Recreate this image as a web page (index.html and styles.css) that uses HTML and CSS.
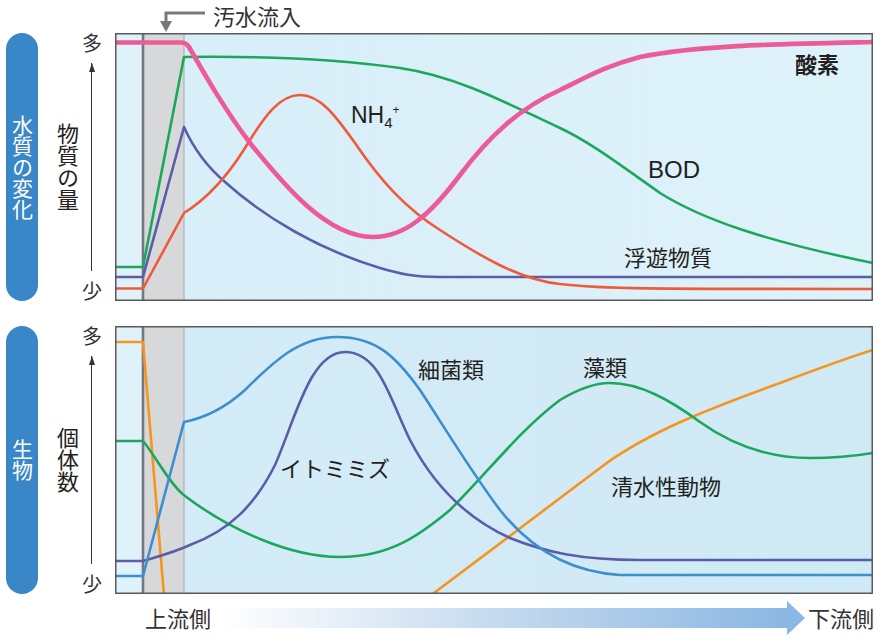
FILE: index.html
```html
<!DOCTYPE html>
<html lang="ja">
<head>
<meta charset="utf-8">
<title>河川の自浄作用</title>
<link rel="stylesheet" href="styles.css">
</head>
<body>
<div class="page">
  <div class="inflow">
    <svg class="inflow-arrow" viewBox="158 0 48 33">
      <path class="inflow-stroke" d="M205,13 H166 V24"/>
      <polygon class="inflow-head" points="160,21 172,21 166,32"/>
    </svg>
    <span class="inflow-label">汚水流入</span>
  </div>

  <div class="section">
    <div class="pill"><span class="pill-text">水質の変化</span></div>
    <div class="axis">
      <span class="axis-title">物質の量</span>
      <div class="scale">
        <span class="scale-mark">多</span>
        <div class="scale-arrow"></div>
        <span class="scale-mark">少</span>
      </div>
    </div>
    <svg class="chart" viewBox="115 33 758 268">
      <defs>
        <linearGradient id="bgTop" x1="0" x2="1" y1="0" y2="0">
          <stop offset="0" stop-color="#d8eef8"/>
          <stop offset="1" stop-color="#def2fa"/>
        </linearGradient>
      </defs>
      <rect class="bg-strip" x="115" y="33" width="28" height="268"/>
      <rect class="bg-top" x="184" y="33" width="689" height="268"/>
      <rect class="band" x="143" y="33" width="41" height="268"/>
      <line class="band-edge" x1="184" y1="33" x2="184" y2="301"/>
      <line class="band-line" x1="143" y1="33" x2="143" y2="301"/>

      <path class="ln ln-green" d="M115,267 L143,267 L184,57 C260,56 330,58 400,68 C460,77 510,105 560,128 C590,142 620,165 660,193 C700,218 760,240 873,263"/>
      <path class="ln ln-purple" d="M115,277 L143,277 L184,127 C192,145 205,165 225,182 C265,218 320,250 380,268 C400,274 415,277 440,277 L873,277"/>
      <path class="ln ln-red" d="M115,288.5 L143,288.5 L184,213 C205,200 225,180 245,148 C265,115 280,95 300,95 C320,95 335,115 355,143 C380,180 405,208 440,230 C480,256 520,280 560,284 C600,289 650,289 873,289"/>
      <path class="ln ln-pink" d="M115,42.5 L181,42.5 Q186,42.5 189,47 C205,75 225,110 250,143 C280,180 325,237 373,237 C405,237 430,215 460,175 C490,135 520,108 560,90 C585,78 605,66 640,57 C700,45 780,44 873,42"/>

      <text class="lbl lbl-latin" x="351" y="123">NH<tspan class="sub" dy="5">4</tspan><tspan class="sup" dy="-14">+</tspan></text>
      <text class="lbl lbl-strong" x="795" y="73">酸素</text>
      <text class="lbl lbl-latin lbl-bod" x="648" y="178">BOD</text>
      <text class="lbl" x="624" y="266">浮遊物質</text>

      <rect class="frame" x="115.75" y="33.75" width="756.5" height="266.5"/>
    </svg>
  </div>

  <div class="section">
    <div class="pill"><span class="pill-text">生物</span></div>
    <div class="axis">
      <span class="axis-title">個体数</span>
      <div class="scale">
        <span class="scale-mark">多</span>
        <div class="scale-arrow"></div>
        <span class="scale-mark">少</span>
      </div>
    </div>
    <svg class="chart" viewBox="115 326 758 268">
      <defs>
        <linearGradient id="bgBottom" x1="0" x2="1" y1="0" y2="0">
          <stop offset="0" stop-color="#d4ecf7"/>
          <stop offset="1" stop-color="#cfe9f5"/>
        </linearGradient>
      </defs>
      <rect class="bg-strip" x="115" y="326" width="28" height="268"/>
      <rect class="bg-bottom" x="184" y="326" width="689" height="268"/>
      <rect class="band" x="143" y="326" width="41" height="268"/>
      <line class="band-edge" x1="184" y1="326" x2="184" y2="594"/>
      <line class="band-line" x1="143" y1="326" x2="143" y2="594"/>

      <path class="ln ln-orange" d="M115,342 L143,342 L164,596"/>
      <path class="ln ln-orange" d="M430,596 L600,468 C650,430 720,405 780,383 C820,368 850,357 873,350"/>
      <path class="ln ln-green" d="M115,441 L143,441 C155,455 170,485 185,496 C230,530 290,557 340,557 C390,557 420,535 450,510 C490,470 520,430 560,400 C580,388 595,383 610,383 C640,383 670,400 700,422 C735,447 770,458 810,458 C840,458 855,456 873,453"/>
      <path class="ln ln-purple" d="M115,561 L143,561 C160,556 175,552 190,545 C230,530 255,505 275,465 C295,420 310,352 345,352 C380,352 390,400 410,440 C435,488 470,520 510,538 C545,552 580,560 640,560 L873,560"/>
      <path class="ln ln-blue" d="M115,576 L143,576 L184,422 C205,418 225,408 245,390 C275,360 300,337 337,337 C375,337 395,355 420,390 C445,428 470,470 500,510 C530,548 570,572 620,575 L873,575"/>

      <text class="lbl" x="418" y="378">細菌類</text>
      <text class="lbl" x="280" y="477">イトミミズ</text>
      <text class="lbl" x="583" y="376">藻類</text>
      <text class="lbl" x="611" y="495">清水性動物</text>

      <rect class="frame" x="115.75" y="326.75" width="756.5" height="266.5"/>
    </svg>
  </div>

  <div class="flow">
    <span class="flow-label flow-up">上流側</span>
    <svg class="flow-arrow" viewBox="220 603 585 34">
      <defs>
        <linearGradient id="flowGrad" x1="0" x2="1" y1="0" y2="0">
          <stop offset="0" stop-color="#ffffff"/>
          <stop offset="0.5" stop-color="#c3d9ef"/>
          <stop offset="1" stop-color="#8ab7e3"/>
        </linearGradient>
      </defs>
      <rect class="flow-bar" x="220" y="610" width="568" height="20"/>
      <polygon class="flow-head" points="787,603 805,620 787,637"/>
    </svg>
    <span class="flow-label flow-down">下流側</span>
  </div>
</div>
</body>
</html>
```

FILE: styles.css
```css
* {
  box-sizing: border-box;
  margin: 0;
  padding: 0;
}

html,
body {
  width: 878px;
  height: 641px;
  overflow: hidden;
  background: #ffffff;
}

body {
  font-family: "Noto Sans CJK JP", "Noto Sans", sans-serif;
  color: #231f20;
}

.page {
  width: 878px;
  height: 641px;
  display: flex;
  flex-direction: column;
}

/* header: sewage inflow marker */
.inflow {
  height: 33px;
  display: flex;
  align-items: flex-start;
  padding-left: 158px;
}

.inflow-arrow {
  display: block;
  width: 48px;
  height: 33px;
}

.inflow-stroke {
  fill: none;
  stroke: #77787b;
  stroke-width: 3;
}

.inflow-head {
  fill: #77787b;
}

.inflow-label {
  margin-left: 7px;
  font-size: 22px;
  line-height: 31px;
  color: #333333;
}

/* chart sections */
.section {
  display: flex;
  height: 268px;
}

.section + .section {
  margin-top: 25px;
}

.pill {
  margin-left: 6px;
  width: 32px;
  border-radius: 16px;
  background: #3a87c7;
  display: flex;
  align-items: center;
  justify-content: center;
}

.pill-text {
  writing-mode: vertical-rl;
  color: #ffffff;
  font-size: 21px;
  line-height: 21px;
}

.axis {
  width: 77px;
  display: flex;
  padding-left: 19px;
  gap: 3px;
}

.axis-title {
  writing-mode: vertical-rl;
  width: 22px;
  font-size: 22px;
  line-height: 22px;
  align-self: center;
  color: #231f20;
}

.scale {
  width: 20px;
  display: flex;
  flex-direction: column;
  align-items: center;
}

.scale-mark {
  font-size: 20px;
  line-height: 20px;
  color: #333333;
}

.scale-arrow {
  flex: 1;
  width: 9px;
  margin: 10px 0;
  background: linear-gradient(#333333, #333333) center / 1.2px 100% no-repeat;
}

.scale-arrow::before {
  content: "";
  display: block;
  width: 0;
  height: 0;
  margin: 0 auto;
  border-left: 3.5px solid transparent;
  border-right: 3.5px solid transparent;
  border-bottom: 9px solid #333333;
}

.chart {
  display: block;
  width: 758px;
  height: 268px;
}

.bg-strip {
  fill: #dff2fa;
}

.bg-top {
  fill: url(#bgTop);
}

.bg-bottom {
  fill: url(#bgBottom);
}

.band {
  fill: #d7d8da;
}

.band-edge {
  stroke: #a6a8ab;
  stroke-width: 1;
}

.band-line {
  stroke: #77787b;
  stroke-width: 2.6;
}

.frame {
  fill: none;
  stroke: #58595b;
  stroke-width: 1.5;
}

.ln {
  fill: none;
  stroke-width: 2.6;
  stroke-linejoin: round;
}

.ln-green { stroke: #1ca75d; }
.ln-purple { stroke: #5b5da9; }
.ln-red { stroke: #ef5a3b; }
.ln-pink { stroke: #ec5b98; stroke-width: 4.6; }
.ln-orange { stroke: #f7941e; }
.ln-blue { stroke: #3b8ecf; }

.lbl {
  font-family: "Noto Sans CJK JP", "Noto Sans", sans-serif;
  font-size: 22px;
  fill: #231f20;
}

.lbl-latin {
  font-family: "Liberation Sans", Arial, sans-serif;
  font-size: 23px;
}

.lbl-bod {
  font-size: 24px;
}

.lbl-strong {
  font-size: 22px;
  font-weight: 700;
}

.sub {
  font-size: 15px;
}

.sup {
  font-size: 12px;
}

/* bottom flow direction */
.flow {
  display: flex;
  align-items: center;
  height: 52px;
}

.flow-label {
  font-size: 22px;
  line-height: 27px;
  color: #333333;
}

.flow-up {
  margin-left: 145px;
}

.flow-arrow {
  display: block;
  margin-left: 9px;
  width: 585px;
  height: 34px;
}

.flow-down {
  margin-left: 3px;
}

.flow-bar {
  fill: url(#flowGrad);
}

.flow-head {
  fill: #8ab7e3;
}
```
